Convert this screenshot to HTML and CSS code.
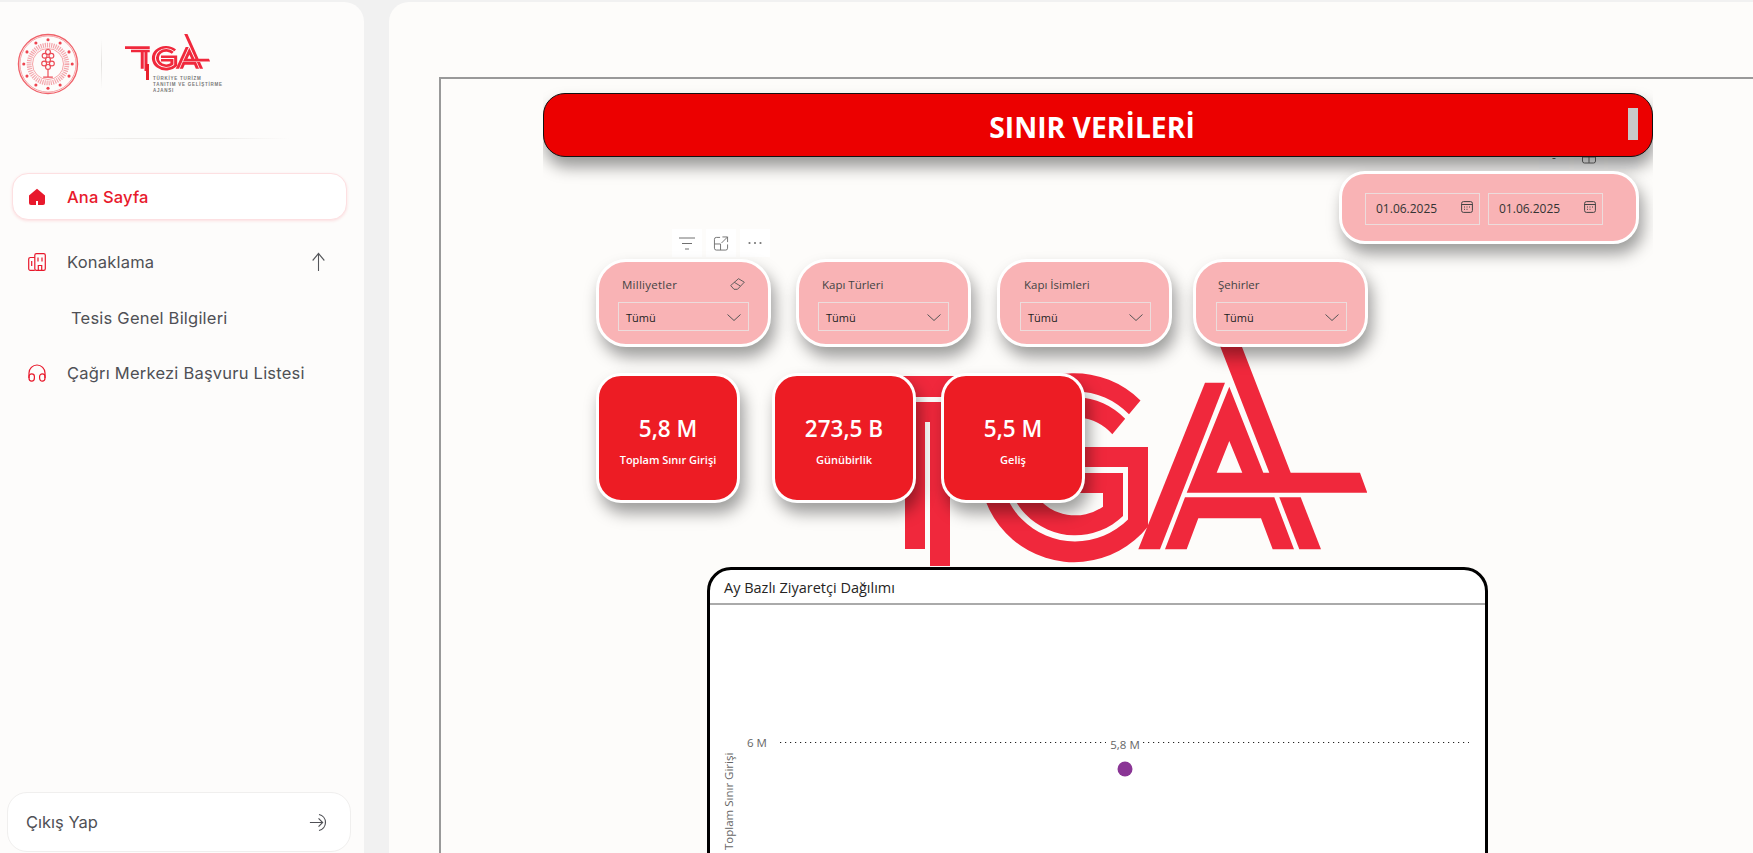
FILE: index.html
```html
<!DOCTYPE html>
<html lang="tr">
<head>
<meta charset="utf-8">
<title>Sınır Verileri</title>
<link rel="stylesheet" href="styles.css">
</head>
<body>
<svg class="defs" width="0" height="0" aria-hidden="true">
  <symbol id="tga" viewBox="800 282 567 284" preserveAspectRatio="none">
    <path d="M800 376H965V397H800Z"/>
    <path d="M840 402H965V422H950V566H930V422H925V549H905V422H840Z"/>
    <path d="M1140.5 400.5A94.5 94.5 0 1 0 1148 526.5V447H1040V467H1128V519.5A75 75 0 1 1 1129 414.3Z"/>
    <path d="M1125.2 418.8A69 69 0 1 0 1123 516V473H1040V493H1103V506.7A49 49 0 1 1 1112.3 434.3Z"/>
    <path d="M1205 382.7H1225L1160 549.3H1138.3Z"/>
    <path fill-rule="evenodd" d="M1229.3 386.7L1186.7 492.7H1367.3L1360 472.7H1290.7L1239.3 340L1216.7 282L1195 282L1217.7 340L1269.3 472.7H1263.3ZM1229.3 441L1216.7 472.7H1242.3Z"/>
    <path d="M1185 497.3H1274.3L1294 549.3H1272.7L1261 518.3H1198.3L1186.7 549.3H1165Z"/>
    <path d="M1279.3 497.3H1300.7L1321 549.3H1299.3Z"/>
  </symbol>
</svg>

<div class="app">
  <aside class="sidebar">
    <div class="brand">
      <svg class="seal" viewBox="0 0 64 64">
        <circle cx="32" cy="32" r="30.500" class="seal-line"/>
        <circle cx="32" cy="32" r="29" class="seal-thin"/>
        <circle cx="32" cy="32" r="19.500" class="seal-dash"/>
        <circle cx="32" cy="32" r="16" class="seal-thin"/>
        <g class="seal-dots">
          <circle cx="32" cy="7" r="1.600"/><circle cx="44.500" cy="10.300" r="1.600"/><circle cx="53.700" cy="19.500" r="1.600"/>
          <circle cx="57" cy="32" r="1.600"/><circle cx="53.700" cy="44.500" r="1.600"/><circle cx="44.500" cy="53.700" r="1.600"/>
          <circle cx="32" cy="57" r="1.600"/><circle cx="19.500" cy="53.700" r="1.600"/><circle cx="10.300" cy="44.500" r="1.600"/>
          <circle cx="7" cy="32" r="1.600"/><circle cx="10.300" cy="19.500" r="1.600"/><circle cx="19.500" cy="10.300" r="1.600"/>
        </g>
        <g class="seal-knot">
          <circle cx="32" cy="19.500" r="2.500"/><circle cx="28.500" cy="23.500" r="2.500"/><circle cx="35.500" cy="23.500" r="2.500"/>
          <circle cx="32" cy="27.500" r="2.500"/><circle cx="28" cy="31.500" r="2.500"/><circle cx="36" cy="31.500" r="2.500"/>
          <circle cx="32" cy="35" r="2.500"/>
          <path d="M32 37.500V45M27 45.500H37"/>
        </g>
      </svg>
      <span class="brand-sep"></span>
      <div class="tga-mini">
        <svg class="tga-mini-logo" viewBox="0 0 85 46">
          <use href="#tga" width="85" height="37"/>
          <rect x="21" y="30" width="3" height="16"/>
        </svg>
        <div class="tga-mini-text">TÜRKİYE TURİZM<br>TANITIM VE GELİŞTİRME<br>AJANSI</div>
      </div>
    </div>
    <div class="side-rule"></div>

    <nav class="nav">
      <a class="nav-item active">
        <svg class="nav-icon" viewBox="0 0 18 18"><path class="fill-red" d="M1 7.400L9 .8l8 6.600V15a2 2 0 0 1-2 2H3a2 2 0 0 1-2-2Z"/><rect class="door" x="8" y="13" width="2" height="4"/></svg>
        <span>Ana Sayfa</span>
      </a>
      <a class="nav-item">
        <svg class="nav-icon" viewBox="0 0 18 18"><g class="stroke-red"><rect x="6.800" y=".7" width="10.500" height="16.600" rx="1.600"/><path d="M6.800 4.500H2.300A1.600 1.600 0 0 0 .7 6.100V15.700A1.600 1.600 0 0 0 2.300 17.300H6.800M3.700 8v5M10 4.500v4M14 4.500v4M10.300 17.300v-4.800h3.400v4.800"/></g></svg>
        <span>Konaklama</span>
        <svg class="nav-arrow" viewBox="0 0 18 20" preserveAspectRatio="none"><path d="M9 19V1.500M2 8.500L9 1.500l7 7"/></svg>
      </a>
      <a class="nav-sub">Tesis Genel Bilgileri</a>
      <a class="nav-item">
        <svg class="nav-icon" viewBox="0 0 18 18"><g class="stroke-red"><path d="M1 14V9a8 8 0 0 1 16 0v5"/><path d="M1 14a2.700 3.200 0 0 0 5.400 0v-1.500a2.700 2.700 0 0 0-5.400 0ZM11.600 14a2.700 3.200 0 0 0 5.400 0v-1.500a2.700 2.700 0 0 0-5.400 0Z"/></g></svg>
        <span>Çağrı Merkezi Başvuru Listesi</span>
      </a>
    </nav>

    <a class="logout">
      <span>Çıkış Yap</span>
      <svg class="logout-icon" viewBox="0 0 22 20"><path d="M1 10H15M10.500 5.500L15 10l-4.500 4.500M11 1.200A9 9 0 0 1 11 18.800"/></svg>
    </a>
  </aside>

  <main class="main">
    <div class="frame">
      <div class="canvas">
        <svg class="tga-big"><use href="#tga"/></svg>

        <div class="top-clip">
          <div class="mini-tool mt1"><span>-</span></div>
          <div class="mini-tool mt2"><svg viewBox="0 0 16 14"><path d="M1.500 3h13v8a2 2 0 0 1-2 2h-9a2 2 0 0 1-2-2ZM8 3v10M1.500 7h13"/></svg></div>
          <div class="mini-tool mt3"></div>
          <div class="title-bar">SINIR VERİLERİ</div>
          <div class="scroll-thumb"></div>
          <div class="date-card">
            <div class="date-input"><span>01.06.2025</span>
              <svg viewBox="0 0 12 12"><rect x=".6" y=".6" width="10.800" height="10.800" rx="1.800"/><path d="M.6 3.500h10.800M3 6h1M5.500 6h1M8 6h1M3 8.300h1M5.500 8.300h1"/></svg></div>
            <div class="date-input"><span>01.06.2025</span>
              <svg viewBox="0 0 12 12"><rect x=".6" y=".6" width="10.800" height="10.800" rx="1.800"/><path d="M.6 3.500h10.800M3 6h1M5.500 6h1M8 6h1M3 8.300h1M5.500 8.300h1"/></svg></div>
          </div>
        </div>

        <div class="visual-tools">
          <div class="vt"><svg viewBox="0 0 16 14"><path d="M0 1.500H16M3 7H13M6 12.500H10"/></svg></div>
          <div class="vt"><svg viewBox="0 0 16 16"><path d="M7 1.500H3A2 2 0 0 0 1 3.500V13a2 2 0 0 0 2 2h10a2 2 0 0 0 2-2V9M1 8.500H7.500V15M9.500 1H15V6.500M15 1L8.500 7.500"/></svg></div>
          <div class="vt"><svg viewBox="0 0 16 4"><circle cx="2.500" cy="2" r="1.100"/><circle cx="8" cy="2" r="1.100"/><circle cx="13.500" cy="2" r="1.100"/></svg></div>
        </div>

        <div class="slicer s1">
          <div class="slicer-label">Milliyetler
            <svg class="eraser" viewBox="0 0 15 12"><path d="M.7 7.500L8.500.7l5.800 3.500L7.500 11.300H4Z M4.300 4.300l6 3.700"/></svg>
          </div>
          <div class="dropdown"><span>Tümü</span><svg viewBox="0 0 14 7"><path d="M.5.5L7 6.500 13.500.5"/></svg></div>
        </div>
        <div class="slicer s2">
          <div class="slicer-label">Kapı Türleri</div>
          <div class="dropdown"><span>Tümü</span><svg viewBox="0 0 14 7"><path d="M.5.5L7 6.500 13.500.5"/></svg></div>
        </div>
        <div class="slicer s3">
          <div class="slicer-label">Kapı İsimleri</div>
          <div class="dropdown"><span>Tümü</span><svg viewBox="0 0 14 7"><path d="M.5.5L7 6.500 13.500.5"/></svg></div>
        </div>
        <div class="slicer s4">
          <div class="slicer-label">Şehirler</div>
          <div class="dropdown"><span>Tümü</span><svg viewBox="0 0 14 7"><path d="M.5.5L7 6.500 13.500.5"/></svg></div>
        </div>

        <div class="kpi k1"><div class="kpi-value">5,8 M</div><div class="kpi-label">Toplam Sınır Girişi</div></div>
        <div class="kpi k2"><div class="kpi-value">273,5 B</div><div class="kpi-label">Günübirlik</div></div>
        <div class="kpi k3"><div class="kpi-value">5,5 M</div><div class="kpi-label">Geliş</div></div>

        <section class="chart">
          <h2 class="chart-title">Ay Bazlı Ziyaretçi Dağılımı</h2>
          <svg class="chart-plot" viewBox="0 0 774 300">
            <path class="grid" d="M70 137.500H396M433 137.500H759"/>
            <text class="tick" x="37" y="142">6 M</text>
            <text class="data-label" x="415" y="144">5,8 M</text>
            <circle class="point" cx="415" cy="164" r="7.500"/>
            <text class="axis-title" transform="translate(23 245) rotate(-90)">Toplam Sınır Girişi</text>
          </svg>
        </section>
      </div>
    </div>
  </main>
</div>
</body>
</html>
```
FILE: styles.css
```css
* { box-sizing: border-box; }
html, body { height: 100%; }
body {
  margin: 0;
  background: #f1f1f1;
  overflow: hidden;
  font-family: "Inter", "Liberation Sans", sans-serif;
  color: #4f5055;
}
.defs { position: absolute; }
#tga { fill: #f0283c; }

.app {
  display: flex;
  gap: 25px;
  height: 100vh;
  padding-top: 2px;
}

/* Sidebar */
.sidebar {
  flex: 0 0 364px;
  display: flex;
  flex-direction: column;
  background: #fdfcfb;
  border-radius: 0 20px 0 0;
  padding: 31px 13px 1px 7px;
}
.brand {
  display: flex;
  align-items: flex-start;
  height: 60px;
  padding-left: 10px;
}
.seal { width: 62px; height: 62px; flex: none; }
.seal-line { fill: none; stroke: #f0626a; stroke-width: 1.400; }
.seal-thin { fill: none; stroke: #f58b90; stroke-width: .8; }
.seal-dash { fill: none; stroke: #f0808a; stroke-width: 5; stroke-dasharray: 1.200 1; opacity: .7; }
.seal-dots { fill: #ee4450; }
.seal-knot { fill: none; stroke: #ec4a55; stroke-width: 1.200; }
.brand-sep {
  width: 1px;
  height: 50px;
  margin: 6px 0 0 22px;
  background: linear-gradient(#fdfcfb, #e4e2e0 50%, #fdfcfb);
}
.tga-mini { margin: 1px 0 0 23px; position: relative; width: 90px; }
.tga-mini-logo { display: block; width: 85px; height: 46px; fill: #e8202c; }
.tga-mini-text {
  position: absolute;
  left: 28px;
  top: 42px;
  width: 80px;
  font: 700 4.500px/6px "Liberation Sans", sans-serif;
  letter-spacing: .75px;
  color: #777;
  white-space: nowrap;
}
.side-rule {
  height: 1px;
  margin: 45px 60px 0 50px;
  background: linear-gradient(90deg, #fdfcfb, #eeecea 30%, #eeecea 70%, #fdfcfb);
}
.nav {
  display: flex;
  flex-direction: column;
  margin-top: 34px;
  padding: 0 4px 0 5px;
  flex: 1;
}
.nav-item {
  display: flex;
  align-items: center;
  height: 47px;
  padding: 0 15px 0 16px;
  font-size: 16.500px;
  font-weight: 400;
  letter-spacing: .22px;
  color: #4f5055;
}
.nav-item + .nav-item { margin-top: 18px; }
.nav-item.active {
  padding-left: 15px;
  background: #fff;
  border: 1px solid #fde0e2;
  border-radius: 16px;
  box-shadow: 0 1px 3px rgba(240, 40, 60, .14);
  color: #e8192c;
  font-weight: 500;
  letter-spacing: .15px;
}
.nav-icon { width: 18px; height: 18px; flex: none; margin-right: 21px; }
.fill-red { fill: #e8192c; }
.door { fill: #fff; }
.stroke-red { fill: none; stroke: #e8192c; stroke-width: 1.200; }
.nav-arrow { width: 15px; height: 20px; margin: 0 6px 0 auto; fill: none; stroke: #55565a; stroke-width: 1.300; }
.nav-sub {
  margin: 21px 0 18px;
  padding-left: 59px;
  height: 25px;
  line-height: 25px;
  font-size: 16.500px;
  letter-spacing: .22px;
  color: #4f5055;
}
.nav-sub + .nav-item { margin-top: 0; }
.logout {
  display: flex;
  align-items: center;
  justify-content: space-between;
  height: 60px;
  padding: 0 21px 0 18px;
  background: #fff;
  border: 1px solid #f0efee;
  border-radius: 20px;
  font-size: 16.500px;
  color: #4f5055;
}
.logout-icon { width: 20px; height: 19px; fill: none; stroke: #4f5055; stroke-width: 1.300; }

/* Main */
.main {
  flex: 1;
  min-width: 0;
  background: #fdfcfa;
  border-radius: 20px 0 0 0;
  padding: 75px 0 0 50px;
  overflow: hidden;
}
.frame {
  height: 100%;
  border-top: 2px solid #999;
  border-left: 2px solid #999;
  font-family: "Open Sans", "Liberation Sans", sans-serif;
}
.canvas { position: relative; height: 800px; }
.tga-big { position: absolute; left: 359px; top: 203px; width: 567px; height: 284px; }

/* Title bar and date slicer: layer clipped as one report visual group */
.top-clip {
  position: absolute;
  left: 102px;
  top: 4px;
  width: 1110px;
  height: 190px;
  overflow: hidden;
}
.title-bar {
  position: absolute;
  left: 0;
  top: 10px;
  width: 100%;
  height: 64px;
  background: #ec0000;
  border: 1px solid #111;
  border-radius: 22px;
  box-shadow: 2px 10px 16px rgba(0, 0, 0, .4);
  color: #fff;
  font-weight: 700;
  font-size: 28.300px;
  line-height: 66px;
  text-align: center;
  padding-right: 12px;
}
.scroll-thumb {
  position: absolute;
  left: 1085px;
  top: 25px;
  width: 10px;
  height: 32px;
  background: #c8c8c8;
}
.mini-tool {
  position: absolute;
  top: 60px;
  width: 30px;
  height: 26px;
  background: #fbfbfb;
  text-align: center;
  color: #555;
  font-size: 12px;
}
.mini-tool span { display: block; margin-top: 6px; }
.mini-tool svg { width: 16px; height: 14px; margin-top: 7px; fill: none; stroke: #666; stroke-width: 1; }
.mt1 { left: 996px; }
.mt2 { left: 1031px; }
.mt3 { left: 1065px; }
.date-card {
  position: absolute;
  left: 796px;
  top: 88px;
  width: 300px;
  height: 73px;
  display: flex;
  gap: 8px;
  padding: 19px 0 0 23px;
  background: #f9b3b5;
  border: 3px solid #fff;
  border-radius: 26px;
  box-shadow: 4px 10px 16px rgba(0, 0, 0, .38);
}
.date-input {
  width: 115px;
  height: 32px;
  display: flex;
  align-items: center;
  justify-content: space-between;
  padding: 0 6px 2px 10px;
  border: 1px solid #ecdcdc;
  font-size: 12px;
  color: #333;
}
.date-input svg { width: 12px; height: 12px; margin-top: -3px; fill: none; stroke: #444; stroke-width: 1; }

.visual-tools {
  position: absolute;
  left: 231px;
  top: 150px;
  display: flex;
  gap: 4px;
}
.vt {
  width: 30px;
  height: 28px;
  display: flex;
  align-items: center;
  justify-content: center;
  background: #fff;
}
.vt svg { width: 16px; height: 15px; fill: none; stroke: #707070; stroke-width: 1; }
.vt:last-child svg { fill: #777; stroke: none; height: 4px; }

.slicer {
  position: absolute;
  top: 180px;
  width: 175px;
  height: 88px;
  padding: 14px 0 0 19px;
  background: #f9b3b5;
  border: 3px solid #fff;
  border-radius: 30px;
  box-shadow: 4px 10px 16px rgba(0, 0, 0, .38);
}
.s1 { left: 155px; }
.s2 { left: 355px; }
.s3 { left: 556px; padding-left: 20px; }
.s4 { left: 752px; padding-left: 20px; }
.slicer-label {
  display: flex;
  align-items: center;
  justify-content: space-between;
  width: 131px;
  height: 16px;
  padding: 0 4px 0 4px;
  font-size: 11.500px;
  color: #444;
}
.s1 .slicer-label { letter-spacing: .25px; }
.s4 .slicer-label { padding-left: 2px; }
.eraser { width: 15px; height: 12px; fill: none; stroke: #555; stroke-width: .9; }
.dropdown {
  display: flex;
  align-items: center;
  justify-content: space-between;
  width: 131px;
  height: 29px;
  margin-top: 10px;
  padding: 2px 7px 0 7px;
  border: 1px solid #ecdcdc;
  font-size: 11px;
  color: #222;
}
.dropdown svg { width: 14px; height: 7px; fill: none; stroke: #555; stroke-width: 1; }

.kpi {
  position: absolute;
  top: 294px;
  width: 144px;
  height: 130px;
  padding-top: 36px;
  background: #ed1c24;
  border: 3px solid #fff;
  border-radius: 25px;
  box-shadow: 4px 10px 16px rgba(0, 0, 0, .38);
  color: #fff;
  text-align: center;
}
.k1 { left: 155px; }
.k2 { left: 331px; }
.k3 { left: 500px; }
.kpi-value { font-size: 22.500px; font-weight: 600; line-height: 34px; }
.kpi-label { font-size: 11px; font-weight: 600; line-height: 16px; margin-top: 6px; }

.chart {
  position: absolute;
  left: 266px;
  top: 488px;
  width: 781px;
  height: 400px;
  background: #fff;
  border: 3px solid #000;
  border-radius: 24px 24px 0 0;
}
.chart-title {
  margin: 0;
  height: 35px;
  padding-left: 14px;
  border-bottom: 2px solid #aaa;
  font-size: 14.500px;
  font-weight: 400;
  line-height: 36px;
  color: #252423;
}
.chart-plot { display: block; width: 774px; height: 300px; }
.grid { fill: none; stroke: #222; stroke-width: 1.200; stroke-dasharray: 1.200 3.800; }
.tick, .data-label, .axis-title { font-size: 11.500px; fill: #666; }
.data-label { text-anchor: middle; }
.point { fill: #8a3595; }
```
